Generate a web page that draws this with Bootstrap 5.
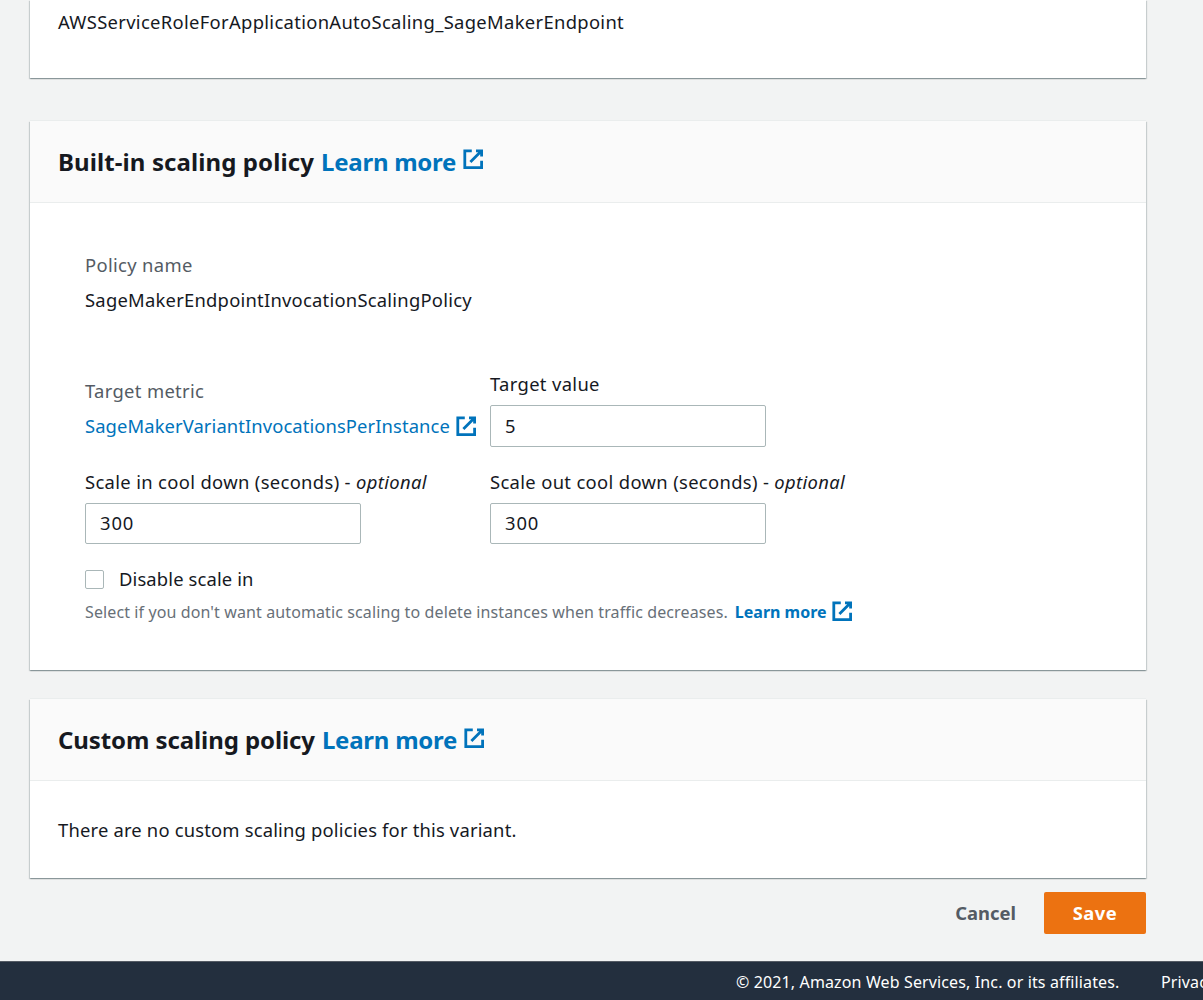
<!DOCTYPE html>
<html lang="en">
<head>
<meta charset="utf-8">
<meta name="viewport" content="width=device-width, initial-scale=1">
<title>Configure variant automatic scaling</title>
<link href="https://cdn.jsdelivr.net/npm/bootstrap@5.3.0/dist/css/bootstrap.min.css" rel="stylesheet">
<style>
body{background:#f2f3f3;color:#16191f;font:18.4px/28px "Noto Sans","Open Sans",sans-serif;height:1000px;overflow:hidden}
.page-main{padding:0 57px 0 30px;height:961px}
.panel{background:#fff;border:0;border-radius:0;box-shadow:0 1px 1px 0 rgba(0,28,36,.22),1px 1px 1px 0 rgba(0,28,36,.14),-1px 1px 1px 0 rgba(0,28,36,.14),0 -1px 0 0 #eaeded}
.panel-role{height:78px;padding:8px 28px;margin-bottom:43px;letter-spacing:.32px}
.panel-builtin{height:549px;margin-bottom:29px}
.panel-custom{height:179px}
.panel-head{height:82px;padding:23px 28px 0;background:#fafafa;border-bottom:1px solid #eaeded;border-radius:0!important}
.panel-title{font-size:24px;line-height:36px;font-weight:700;margin:0;white-space:nowrap}
.panel-title a{margin-left:7px;letter-spacing:-.25px}
.panel-title .ext{margin:3.6px 0 0 5.6px}
.title-builtin{letter-spacing:.1px}
.title-custom{letter-spacing:-.09px}
.panel-custom .panel-title .ext{margin-top:4.6px}
a{color:#0073bb;text-decoration:none}
.ext{width:22.4px;height:22.4px;flex:none;fill:none;stroke:#0073bb;stroke-width:2}
.muted-label{color:#545b64;letter-spacing:.33px}
.form-area{padding:48px 55px 0;white-space:nowrap}
.policy-value{margin-top:7px;letter-spacing:.235px}
.field-grid{display:grid;grid-template-columns:391px 391px;gap:21px 14px;margin-top:56px}
.metric{padding-top:7px}
.metric a{margin-top:7px;letter-spacing:.09px}
.metric .ext{margin:2.6px 0 0 5.3px}
.field-label{display:block;margin-bottom:7px;letter-spacing:.34px}
.field-box{width:276px;height:42px;border:1px solid #aab7b8;border-radius:2px;padding:0 14px 2px;font-size:18.4px;color:#16191f;letter-spacing:.9px}
.short-box{height:41px}
.check-row{margin-top:21px;gap:15px;letter-spacing:.13px}
.tick{width:19px;height:19px;border:1px solid #aab7b8!important;border-radius:2px!important;margin:0;flex:none}
.hint{margin-top:7px;font-size:16px;line-height:24px;color:#687078;letter-spacing:.11px}
.hint a{margin-left:7px;letter-spacing:0}
.hint .ext{margin-left:4.5px}
.empty-note{padding:35px 28px 0;letter-spacing:.18px}
.actions{padding-top:14px}
.btn-text{font-weight:700;color:#545b64;padding:0 28px;line-height:42px;border:0;font-size:18.4px}
.btn-save{width:102px;height:42px;padding:0;border:0;border-radius:2px;background:#ec7211;color:#fff;font-weight:700;font-size:18.4px;letter-spacing:.45px}
.foot{height:39px;background:#232f3e;border-top:1px solid #545b64;color:#fff;font-size:16px;line-height:24px;padding:8px 0 0 736px;gap:41.5px;white-space:nowrap;overflow:hidden;letter-spacing:.13px}
</style>
<script src="https://cdn.jsdelivr.net/npm/bootstrap@5.3.0/dist/js/bootstrap.bundle.min.js"></script>
</head>
<body>
<svg class="d-none"><symbol id="external" viewBox="0 0 16 16"><path d="M10 2h4v4M6 10l8-8M14 9.048V14H2V2h5"/></symbol></svg>
<main class="page-main">
  <section class="card panel panel-role">AWSServiceRoleForApplicationAutoScaling_SageMakerEndpoint</section>

  <section class="card panel panel-builtin">
    <header class="card-header panel-head">
      <h2 class="panel-title d-flex"><span class="title-builtin">Built-in scaling policy</span><a href="#" class="d-flex">Learn more<svg class="ext"><use href="#external"/></svg></a></h2>
    </header>
    <div class="form-area">
      <div class="muted-label">Policy name</div>
      <div class="policy-value">SageMakerEndpointInvocationScalingPolicy</div>
      <div class="field-grid">
        <div class="metric">
          <div class="muted-label">Target metric</div>
          <a href="#" class="d-flex">SageMakerVariantInvocationsPerInstance<svg class="ext"><use href="#external"/></svg></a>
        </div>
        <div>
          <label class="field-label" for="target">Target value</label>
          <input id="target" class="form-control field-box" value="5">
        </div>
        <div>
          <label class="field-label" for="cool-in">Scale in cool down (seconds) - <em>optional</em></label>
          <input id="cool-in" class="form-control field-box short-box" value="300">
        </div>
        <div>
          <label class="field-label" for="cool-out">Scale out cool down (seconds) - <em>optional</em></label>
          <input id="cool-out" class="form-control field-box short-box" value="300">
        </div>
      </div>
      <div class="check-row d-flex align-items-center"><input id="disable" type="checkbox" class="form-check-input tick"><label for="disable">Disable scale in</label></div>
      <div class="hint d-flex"><span>Select if you don't want automatic scaling to delete instances when traffic decreases.</span><a href="#" class="fw-bold d-flex">Learn more<svg class="ext"><use href="#external"/></svg></a></div>
    </div>
  </section>

  <section class="card panel panel-custom">
    <header class="card-header panel-head">
      <h2 class="panel-title d-flex"><span class="title-custom">Custom scaling policy</span><a href="#" class="d-flex">Learn more<svg class="ext"><use href="#external"/></svg></a></h2>
    </header>
    <div class="empty-note">There are no custom scaling policies for this variant.</div>
  </section>

  <div class="actions d-flex justify-content-end">
    <button class="btn btn-text">Cancel</button>
    <button class="btn btn-save">Save</button>
  </div>
</main>
<footer class="foot d-flex"><span>© 2021, Amazon Web Services, Inc. or its affiliates.</span><span>Privacy</span></footer>
</body>
</html>
